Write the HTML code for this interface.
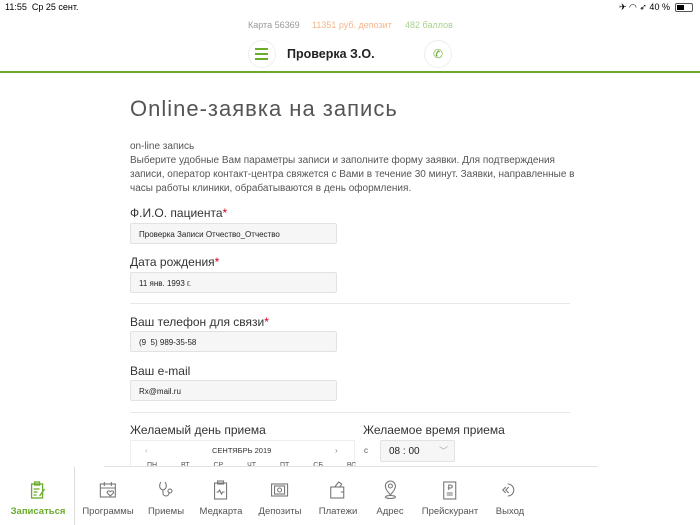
<!DOCTYPE html><html><head><meta charset="utf-8"><style>
*{margin:0;padding:0;box-sizing:border-box}
body{width:700px;height:525px;overflow:hidden;background:#fff;font-family:"Liberation Sans",sans-serif;position:relative;color:#333}
.a{position:absolute;white-space:nowrap}
.inp{position:absolute;left:130px;width:207px;height:21px;background:#f6f6f6;border:1px solid #e2e2e2;border-radius:2px;font-size:8px;padding:6px 0 0 8px;color:#222}
.lbl{position:absolute;left:130px;font-size:12px;color:#333}
.lbl b{color:#d0021b;font-weight:normal}
.hr{position:absolute;left:130px;width:440px;height:1px;background:#e8e8e8}
.tab{position:absolute;top:480px;text-align:center;font-size:9.5px;color:#555;transform:translateX(-50%)}
.tab svg{display:block;margin:0 auto 6px;width:20px;height:20px}
</style></head><body>
<div class="a" style="left:5px;top:2px;font-size:9px;color:#000">11:55&nbsp;&nbsp;Ср 25 сент.</div>
<div class="a" style="left:619px;top:2px;font-size:9px;color:#000">✈ ◠ ➶ 40 %</div>
<div class="a" style="left:675px;top:3px;width:18px;height:9px;border:1px solid #555;border-radius:2px"><div style="width:7px;height:5px;background:#000;margin:1px"></div></div>
<div class="a" style="left:248px;top:20px;font-size:9px;color:#999">Карта 56369</div>
<div class="a" style="left:312px;top:20px;font-size:9px;color:#f6b68a">11351 руб. депозит</div>
<div class="a" style="left:405px;top:20px;font-size:9px;color:#a9d18e">482 баллов</div>
<div class="a" style="left:248px;top:40px;width:28px;height:28px;border:1px solid #eee;border-radius:50%"></div>
<div class="a" style="left:255px;top:48px;width:13px;height:2px;background:#6aaa2c;box-shadow:0 5px 0 #6aaa2c,0 10px 0 #6aaa2c"></div>
<div class="a" style="left:287px;top:47px;font-size:12.5px;font-weight:bold;color:#222">Проверка З.О.</div>
<div class="a" style="left:424px;top:40px;width:28px;height:28px;border:1px solid #eee;border-radius:50%;text-align:center;font-size:12px;line-height:27px;color:#6aaa2c">✆</div>
<div class="a" style="left:0;top:71px;width:700px;height:2px;background:#6aaa2c"></div>
<div class="a" style="left:130px;top:96px;font-size:22px;color:#555;letter-spacing:1px">Online-заявка на запись</div>
<div class="a" style="left:130px;top:140px;font-size:10px;color:#555;line-height:14px;white-space:normal;width:448px">on-line запись<br>Выберите удобные Вам параметры записи и заполните форму заявки. Для подтверждения записи, оператор контакт-центра свяжется с Вами в течение 30 минут. Заявки, направленные в часы работы клиники, обрабатываются в день оформления.</div>
<div class="lbl" style="top:206px">Ф.И.О. пациента<b>*</b></div>
<div class="inp" style="top:223px">Проверка Записи Отчество_Отчество</div>
<div class="lbl" style="top:255px">Дата рождения<b>*</b></div>
<div class="inp" style="top:272px">11 янв. 1993 г.</div>
<div class="hr" style="top:303px"></div>
<div class="lbl" style="top:315px">Ваш телефон для связи<b>*</b></div>
<div class="inp" style="top:331px">(9&nbsp; 5) 989-35-58</div>
<div class="lbl" style="top:364px">Ваш e-mail</div>
<div class="inp" style="top:380px">Rx@mail.ru</div>
<div class="hr" style="top:412px"></div>
<div class="lbl" style="top:423px">Желаемый день приема</div>
<div class="lbl" style="left:363px;top:423px">Желаемое время приема</div>
<div class="a" style="left:130px;top:440px;width:225px;height:30px;border:1px solid #eee"></div>
<div class="a" style="left:145px;top:446px;font-size:8px;color:#bbb">‹</div>
<div class="a" style="left:212px;top:446px;font-size:7.5px;color:#333">СЕНТЯБРЬ 2019</div>
<div class="a" style="left:335px;top:446px;font-size:8px;color:#888">›</div>
<div class="a" style="left:147px;top:462px;font-size:7px;color:#555;word-spacing:22px">ПН ВТ СР ЧТ ПТ СБ ВС</div>
<div class="a" style="left:364px;top:446px;font-size:8px;color:#555">с</div>
<div class="a" style="left:380px;top:440px;width:75px;height:22px;border:1px solid #e2e2e2;background:#f6f6f6;border-radius:2px;font-size:10px;padding:5px 0 0 8px;color:#222">08 : 00<span style="position:absolute;right:6px;top:3px;color:#aaa;font-size:9px">﹀</span></div>
<div class="a" style="left:0;top:466px;width:700px;height:59px;background:#fff"></div>
<div class="a" style="left:104px;top:466px;width:494px;height:1px;background:#e2e2e2"></div>
<div class="a" style="left:74px;top:467px;width:1px;height:58px;background:#ddd"></div>
<div class="tab" style="left:38px;color:#6aaa2c;font-weight:bold"><svg viewBox="0 0 20 20" fill="none" stroke="#6aaa2c" stroke-width="1.3"><rect x="4" y="4" width="11" height="14"/><rect x="7" y="2" width="5" height="3"/><path d="M6 9h6M6 12h4M6 15h3M12 16l5-7"/></svg>Записаться</div>
<div class="tab" style="left:108px"><svg viewBox="0 0 20 20" fill="none" stroke="#777" stroke-width="1.1"><rect x="2" y="4" width="15" height="13"/><path d="M6 2v4M13 2v4M2 8h15M12 12c1-2 4-1 3 1l-3 3-3-3c-1-2 2-3 3-1"/></svg>Программы</div>
<div class="tab" style="left:166px"><svg viewBox="0 0 20 20" fill="none" stroke="#777" stroke-width="1.1"><path d="M5 2c-2 3-2 7 2 8 4-1 4-5 2-8M7 10v3c0 4 6 4 6 0v-1"/><circle cx="14" cy="11" r="2"/></svg>Приемы</div>
<div class="tab" style="left:221px"><svg viewBox="0 0 20 20" fill="none" stroke="#777" stroke-width="1.1"><rect x="4" y="3" width="12" height="16"/><rect x="7" y="1" width="6" height="3"/><path d="M6 12h2l1-2 2 4 1-2h2"/></svg>Медкарта</div>
<div class="tab" style="left:280px"><svg viewBox="0 0 20 20" fill="none" stroke="#777" stroke-width="1.1"><rect x="2" y="4" width="16" height="12"/><rect x="5" y="6" width="10" height="8"/><circle cx="10" cy="10" r="2"/></svg>Депозиты</div>
<div class="tab" style="left:338px"><svg viewBox="0 0 20 20" fill="none" stroke="#777" stroke-width="1.1"><rect x="3" y="7" width="13" height="11"/><path d="M7 7l4-5 3 2-2 3M13 12h3"/></svg>Платежи</div>
<div class="tab" style="left:390px"><svg viewBox="0 0 20 20" fill="none" stroke="#777" stroke-width="1.1"><path d="M10 15c-3-4-5-6-5-9a5 5 0 0110 0c0 3-2 5-5 9z"/><circle cx="10" cy="6" r="2"/><ellipse cx="10" cy="17" rx="5" ry="1.5"/></svg>Адрес</div>
<div class="tab" style="left:450px"><svg viewBox="0 0 20 20" fill="none" stroke="#777" stroke-width="1.1"><rect x="4" y="2" width="12" height="17"/><path d="M9 10V5h2a1.5 1.5 0 010 3H8M7 13h6M7 15h6"/></svg>Прейскурант</div>
<div class="tab" style="left:510px"><svg viewBox="0 0 20 20" fill="none" stroke="#777" stroke-width="1.1"><path d="M8 4a6 6 0 110 12M6 7l-3 3 3 3M9 7l-3 3 3 3"/></svg>Выход</div>
</body></html>
